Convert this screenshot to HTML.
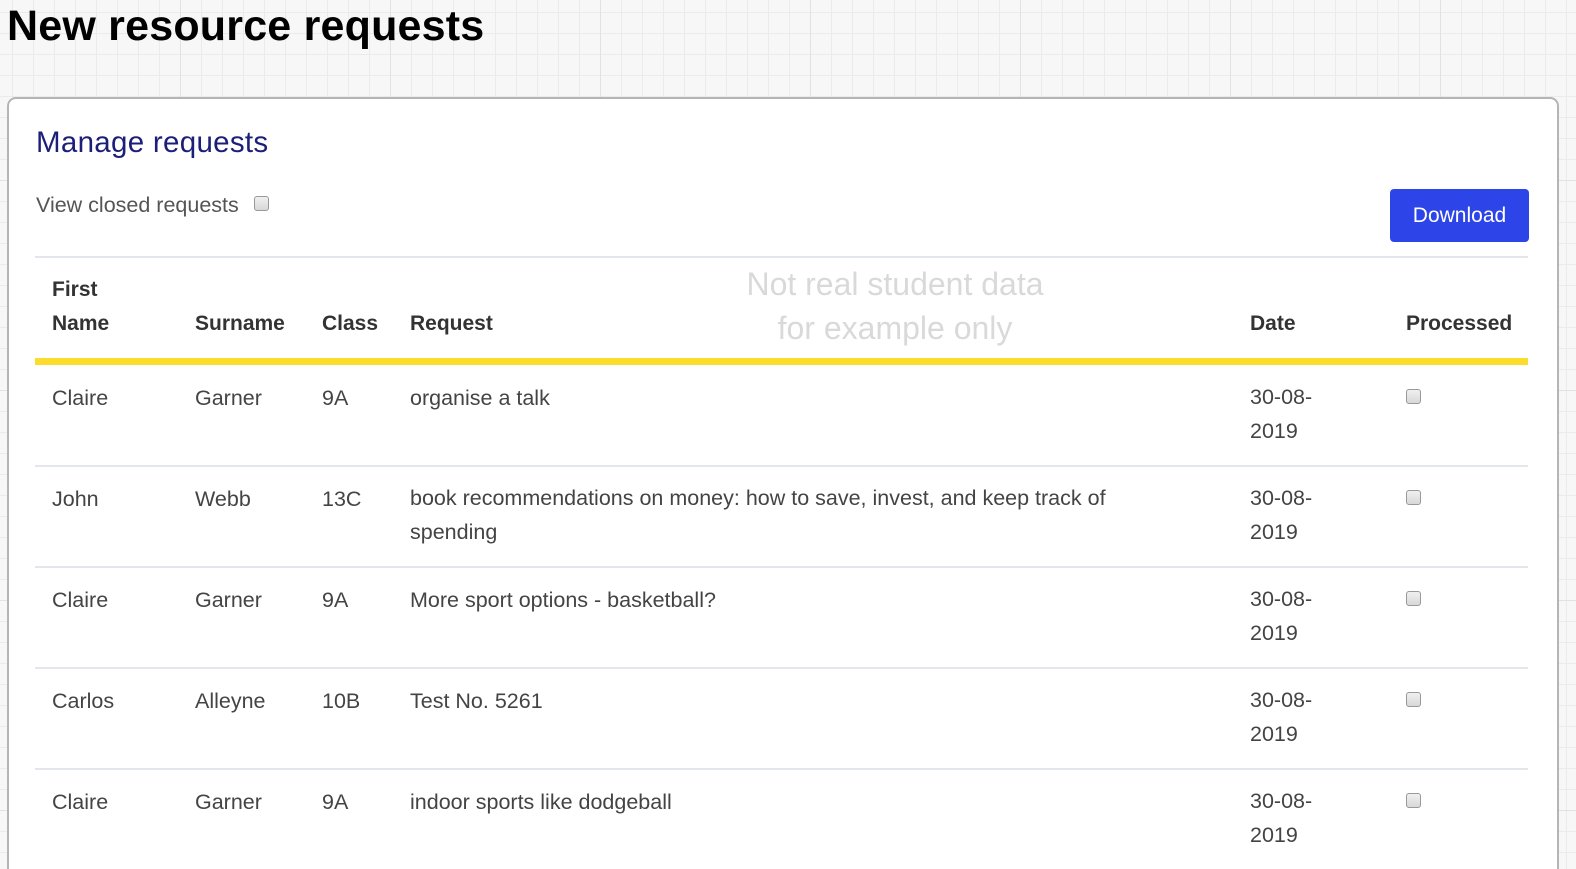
<!DOCTYPE html>
<html><head><meta charset="utf-8"><style>
*{margin:0;padding:0;box-sizing:border-box}
html,body{width:1576px;height:869px;overflow:hidden}
body{position:relative;font-family:"Liberation Sans",sans-serif;
background-color:#f7f7f7;
background-image:linear-gradient(#e2e2e2 1px,transparent 1px),linear-gradient(90deg,#e2e2e2 1px,transparent 1px),linear-gradient(#ebebeb 1px,transparent 1px),linear-gradient(90deg,#ebebeb 1px,transparent 1px);
background-size:210px 210px,210px 210px,21px 21px,21px 21px;background-position:0 -30px,180px 0,0 -9px,12px 0}
.a{position:absolute;white-space:nowrap}
h1{position:absolute;left:7px;top:2px;font-size:43px;font-weight:bold;color:#000;letter-spacing:0.2px}
.card{position:absolute;left:7px;top:97px;width:1552px;height:772px;background:#fff;border:2px solid #b5b5b5;border-bottom:none;border-radius:9px 9px 0 0}
.t{font-size:21.5px;color:#444}
.h{font-size:21px;font-weight:bold;color:#333}
.cb{position:absolute;width:15px;height:15px;border:1px solid #999;border-radius:3px;background:linear-gradient(#f0f0f0,#d8d8d8)}
.line{position:absolute;left:35px;width:1493px;height:2px;background:#e3e6ea}
</style></head><body>
<h1>New resource requests</h1>
<div class="card"></div>
<div class="a" style="left:36px;top:126px;font-size:29.5px;color:#1c1f78;letter-spacing:0.3px">Manage requests</div>
<div class="a t" style="left:36px;top:193px;color:#555">View closed requests</div>
<div class="cb" style="left:254px;top:196px"></div>
<div class="a" style="left:1390px;top:189px;width:139px;height:53px;background:#2c44e8;border-radius:4px;color:#fff;font-size:21px;line-height:53px;text-align:center">Download</div>
<div class="line" style="top:256px"></div>
<div class="a" style="left:700px;top:262px;width:390px;text-align:center;font-size:32px;line-height:44px;color:#d9d9d9;white-space:normal">Not real student data<br>for example only</div>
<div class="a h" style="left:52px;top:273px;line-height:34px">First<br>Name</div>
<div class="a h" style="left:195px;top:312px">Surname</div>
<div class="a h" style="left:322px;top:312px">Class</div>
<div class="a h" style="left:410px;top:312px">Request</div>
<div class="a h" style="left:1250px;top:312px">Date</div>
<div class="a h" style="left:1406px;top:312px">Processed</div>
<div class="a" style="left:35px;top:358px;width:1493px;height:7px;background:#fddd2c"></div>

<div class="a t" style="left:52px;top:386px">Claire</div>
<div class="a t" style="left:195px;top:386px">Garner</div>
<div class="a t" style="left:322px;top:386px">9A</div>
<div class="a t" style="left:410px;top:386px">organise a talk</div>
<div class="a t" style="left:1250px;top:380px;line-height:34px">30-08-<br>2019</div>
<div class="cb" style="left:1406px;top:389px"></div>
<div class="line" style="top:465px"></div>

<div class="a t" style="left:52px;top:487px">John</div>
<div class="a t" style="left:195px;top:487px">Webb</div>
<div class="a t" style="left:322px;top:487px">13C</div>
<div class="a t" style="left:410px;top:481px;line-height:34px">book recommendations on money: how to save, invest, and keep track of<br>spending</div>
<div class="a t" style="left:1250px;top:481px;line-height:34px">30-08-<br>2019</div>
<div class="cb" style="left:1406px;top:490px"></div>
<div class="line" style="top:566px"></div>

<div class="a t" style="left:52px;top:588px">Claire</div>
<div class="a t" style="left:195px;top:588px">Garner</div>
<div class="a t" style="left:322px;top:588px">9A</div>
<div class="a t" style="left:410px;top:588px">More sport options - basketball?</div>
<div class="a t" style="left:1250px;top:582px;line-height:34px">30-08-<br>2019</div>
<div class="cb" style="left:1406px;top:591px"></div>
<div class="line" style="top:667px"></div>

<div class="a t" style="left:52px;top:689px">Carlos</div>
<div class="a t" style="left:195px;top:689px">Alleyne</div>
<div class="a t" style="left:322px;top:689px">10B</div>
<div class="a t" style="left:410px;top:689px">Test No. 5261</div>
<div class="a t" style="left:1250px;top:683px;line-height:34px">30-08-<br>2019</div>
<div class="cb" style="left:1406px;top:692px"></div>
<div class="line" style="top:768px"></div>

<div class="a t" style="left:52px;top:790px">Claire</div>
<div class="a t" style="left:195px;top:790px">Garner</div>
<div class="a t" style="left:322px;top:790px">9A</div>
<div class="a t" style="left:410px;top:790px">indoor sports like dodgeball</div>
<div class="a t" style="left:1250px;top:784px;line-height:34px">30-08-<br>2019</div>
<div class="cb" style="left:1406px;top:793px"></div>
</body></html>
